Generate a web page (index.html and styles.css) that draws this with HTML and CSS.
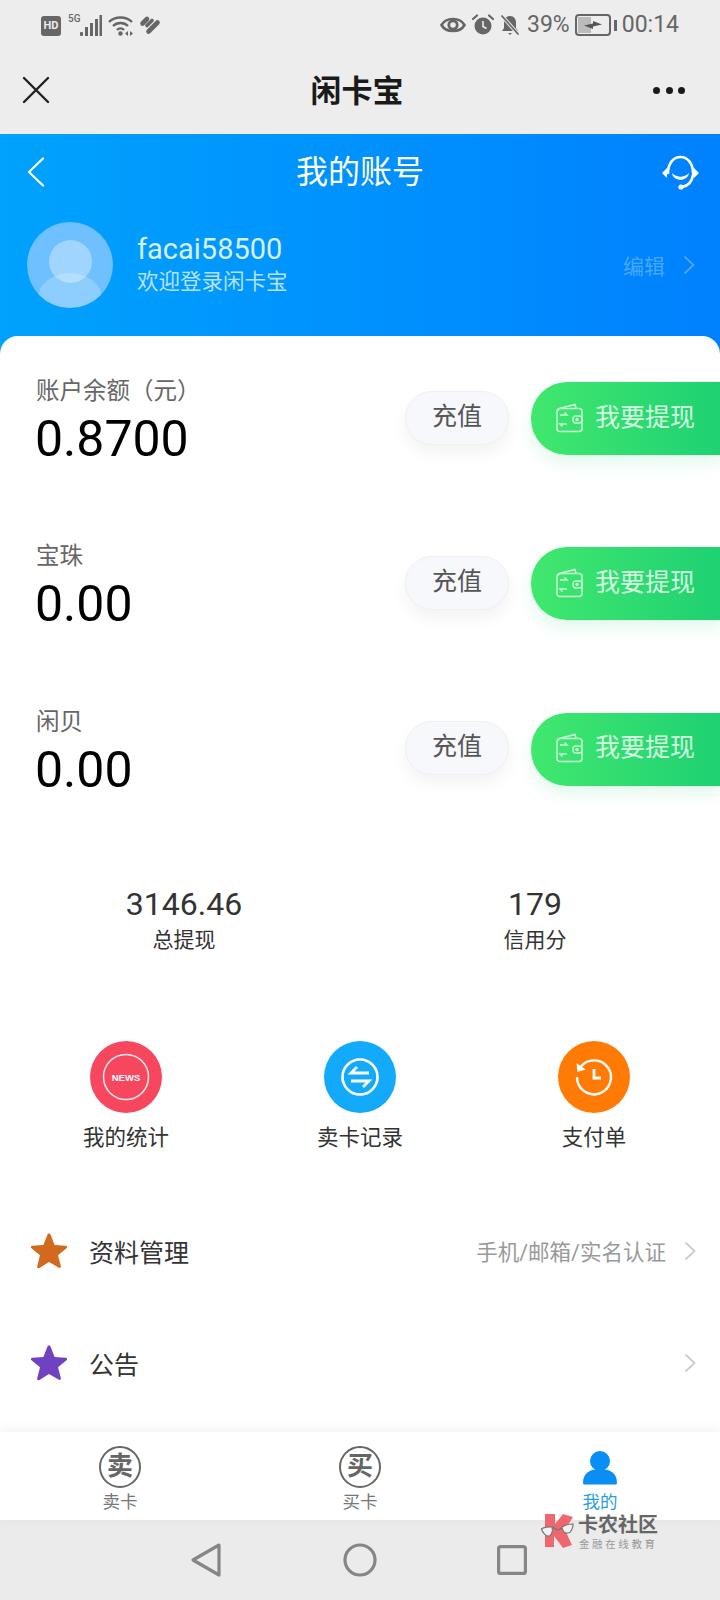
FILE: index.html
```html
<!DOCTYPE html>
<html lang="zh">
<head>
<meta charset="utf-8">
<title>闲卡宝</title>
<link rel="stylesheet" href="styles.css">
</head>
<body>
<div class="app">
  <div class="status">
    <div class="status-left">
      <span class="hd">HD</span>
      <span class="fiveg">5G</span>
      <svg class="sig" width="22" height="22" viewBox="0 0 22 22"><g fill="#666"><rect x="0" y="17" width="3" height="4" rx="1"/><rect x="5" y="12" width="3" height="9"/><rect x="10" y="8" width="3" height="13"/><rect x="15" y="4" width="3" height="17"/><rect x="19.500" y="0" width="2.500" height="21"/></g></svg>
      <svg class="wifi" width="26" height="22" viewBox="0 0 26 22"><g fill="none" stroke="#666" stroke-width="2.400"><path d="M1 7C7 1 18 1 24 7"/><path d="M5 11C9 7 16 7 20 11"/><path d="M9 15C11 13 14 13 16 15"/></g><circle cx="12.500" cy="18.500" r="2.200" fill="#666"/><path d="M17 18.500l3-2.500v5zM22 16l3 2.500-3 2.500z" fill="#666"/></svg>
      <svg class="hw" width="22" height="20" viewBox="0 0 22 20"><g fill="none" stroke="#666" stroke-width="4.600" stroke-linecap="round"><path d="M3.500 8.500L8 4"/><path d="M9.500 16.500L18.500 7.500"/><path d="M8 10.500L13 5.500" stroke-width="3.600"/></g></svg>
    </div>
    <div class="status-right">
      <svg width="26" height="20" viewBox="0 0 26 20"><path d="M1.500 10C6 2 20 2 24.500 10 20 18 6 18 1.500 10z" fill="none" stroke="#666" stroke-width="2.600"/><circle cx="13" cy="10" r="4.200" fill="none" stroke="#666" stroke-width="2.800"/></svg>
      <svg width="22" height="22" viewBox="0 0 22 22"><circle cx="11" cy="12" r="8.500" fill="#666"/><path d="M11 7v5.500l3.500 2" fill="none" stroke="#ededed" stroke-width="1.600"/><path d="M1 5L5 1.500M21 5L17 1.500" stroke="#666" stroke-width="2.200" stroke-linecap="round"/></svg>
      <svg class="bell" width="20" height="22" viewBox="0 0 20 22"><path d="M10 2c4 0 6 3 6 7v5l2 3H2l2-3V9c0-4 2-7 6-7z" fill="#666"/><path d="M8 19h4l-2 2z" fill="#666"/><path d="M2 2l16 18" stroke="#ededed" stroke-width="3.500"/><path d="M1.500 1.500l17 19" stroke="#666" stroke-width="1.800"/></svg>
      <span class="st-text">39%</span>
      <span class="battery"><span class="batt-fill"></span><svg class="bolt" width="20" height="10" viewBox="0 0 20 10"><path d="M1 5.500L10 3.500 10 1 19 4.500 10 6.500 10 9z" fill="#555"/></svg></span>
      <span class="batt-cap"></span>
      <span class="st-text">00:14</span>
    </div>
  </div>

  <div class="nav">
    <svg width="28" height="28" viewBox="0 0 28 28"><path d="M2 2L26 26M26 2L2 26" stroke="#222" stroke-width="2.400" stroke-linecap="round"/></svg>
    <div class="nav-title">闲卡宝</div>
    <div class="dots"><i></i><i></i><i></i></div>
  </div>

  <div class="hero">
    <div class="hero-bar">
      <svg width="18" height="30" viewBox="0 0 18 30"><path d="M16 1.500L2 15 16 28.500" fill="none" stroke="#fff" stroke-width="2.200" stroke-linecap="round" stroke-linejoin="round"/></svg>
      <div class="hero-title">我的账号</div>
      <svg width="38" height="36" viewBox="0 0 38 36"><g fill="none" stroke="#fff" stroke-width="2.600" stroke-linecap="round"><path d="M7 19C7 10 12 3 19.500 3S32 10 32 19"/><path d="M32 21c-1 7-5 11-11 12"/></g><path d="M11 19c5 5 12 5 17 0-1 9-16 9-17 0z" fill="#fff"/><path d="M1 19l5-5v10zM38 19l-5-5v10z" fill="#fff"/><circle cx="20" cy="33" r="2.600" fill="#fff"/></svg>
    </div>
    <div class="profile">
      <div class="avatar"><span class="av-head"></span><span class="av-body"></span></div>
      <div class="profile-text">
        <div class="uname">facai58500</div>
        <div class="welcome">欢迎登录闲卡宝</div>
      </div>
      <div class="edit">
        <span>编辑</span>
        <svg class="chev" width="12" height="20" viewBox="0 0 12 20"><path d="M1.500 1.500L10.500 10 1.500 18.500" fill="none" stroke="currentColor" stroke-width="1.800"/></svg>
      </div>
    </div>
  </div>

  <div class="card">
    <div class="funds">
      <div class="fund">
        <div class="fund-info"><div class="fund-label">账户余额（元）</div><div class="fund-value">0.8700</div></div>
        <div class="btn-light">充值</div>
        <div class="btn-green"><svg width="28" height="30" viewBox="0 0 28 30"><use href="#wallet"/></svg><span>我要提现</span></div>
      </div>
      <div class="fund">
        <div class="fund-info"><div class="fund-label">宝珠</div><div class="fund-value">0.00</div></div>
        <div class="btn-light">充值</div>
        <div class="btn-green"><svg width="28" height="30" viewBox="0 0 28 30"><use href="#wallet"/></svg><span>我要提现</span></div>
      </div>
      <div class="fund">
        <div class="fund-info"><div class="fund-label">闲贝</div><div class="fund-value">0.00</div></div>
        <div class="btn-light">充值</div>
        <div class="btn-green"><svg width="28" height="30" viewBox="0 0 28 30"><use href="#wallet"/></svg><span>我要提现</span></div>
      </div>
    </div>

    <div class="stats">
      <div class="stat"><div class="stat-value">3146.46</div><div class="stat-label">总提现</div></div>
      <div class="stat stat-b"><div class="stat-value">179</div><div class="stat-label">信用分</div></div>
    </div>

    <div class="shortcuts">
      <div class="shortcut">
        <svg width="72" height="72" viewBox="0 0 72 72"><circle cx="36" cy="36" r="36" fill="#f7475f"/><circle cx="36" cy="36" r="22.500" fill="none" stroke="#fff" stroke-width="1.500" opacity=".9"/><text x="36" y="39.500" text-anchor="middle" class="news">NEWS</text></svg>
        <div class="shortcut-label">我的统计</div>
      </div>
      <div class="shortcut">
        <svg width="72" height="72" viewBox="0 0 72 72"><circle cx="36" cy="36" r="36" fill="#14aafc"/><circle cx="36" cy="36" r="17.500" fill="none" stroke="#fff" stroke-width="2.600"/><path d="M45 32H27l6-6M27 40h18l-6 6" fill="none" stroke="#fff" stroke-width="2.800"/></svg>
        <div class="shortcut-label">卖卡记录</div>
      </div>
      <div class="shortcut">
        <svg width="72" height="72" viewBox="0 0 72 72"><circle cx="36" cy="36" r="36" fill="#ff7b05"/><path d="M22.500 26A17 17 0 1 1 19 36" fill="none" stroke="#fff" stroke-width="2.400"/><path d="M18.500 22l1 9 8-2.500z" fill="#fff"/><path d="M36 28v9h7" fill="none" stroke="#fff" stroke-width="2.800"/></svg>
        <div class="shortcut-label">支付单</div>
      </div>
    </div>

    <div class="rows">
      <div class="row">
        <svg width="38" height="38" viewBox="0 0 38 38"><use href="#star" fill="#d2691e"/></svg>
        <span class="row-title">资料管理</span>
        <span class="row-note">手机/邮箱/实名认证</span>
        <svg class="chev-gray" width="12" height="20" viewBox="0 0 12 20"><path d="M1.500 1.500L10.500 10 1.500 18.500" fill="none" stroke="currentColor" stroke-width="1.800"/></svg>
      </div>
      <div class="row">
        <svg width="38" height="38" viewBox="0 0 38 38"><use href="#star" fill="#6f42c1"/></svg>
        <span class="row-title">公告</span>
        <span class="row-note"></span>
        <svg class="chev-gray" width="12" height="20" viewBox="0 0 12 20"><path d="M1.500 1.500L10.500 10 1.500 18.500" fill="none" stroke="currentColor" stroke-width="1.800"/></svg>
      </div>
    </div>
  </div>

  <div class="tabbar">
    <div class="tab">
      <span class="seal">卖</span>
      <span class="tab-label">卖卡</span>
    </div>
    <div class="tab">
      <span class="seal">买</span>
      <span class="tab-label">买卡</span>
    </div>
    <div class="tab tab-on">
      <svg width="36" height="36" viewBox="0 0 36 36"><circle cx="18" cy="11" r="10" fill="#0a8ef5"/><path d="M1 33c0-10 7-14 17-14s17 4 17 14c0 1-1 1.500-2 1.500H3c-1 0-2-.5-2-1.500z" fill="#0a8ef5"/></svg>
      <span class="tab-label">我的</span>
    </div>
  </div>

  <div class="sysnav">
    <svg width="32" height="36" viewBox="0 0 32 36"><path d="M29 3L3 18 29 33z" fill="none" stroke="#868686" stroke-width="3.200" stroke-linejoin="round"/></svg>
    <svg width="34" height="34" viewBox="0 0 34 34"><circle cx="17" cy="17" r="15" fill="none" stroke="#868686" stroke-width="3.200"/></svg>
    <svg width="30" height="30" viewBox="0 0 30 30"><rect x="1.600" y="1.600" width="26.800" height="26.800" rx="2" fill="none" stroke="#868686" stroke-width="3.200"/></svg>
  </div>

  <div class="watermark">
    <svg class="wm-logo" width="34" height="35" viewBox="0 0 34 35"><path d="M5 1H15V11L23 1l10 3-8 13 7 15-9 3-9-12v11H5z" fill="#ef5f68" opacity=".95"/><path d="M1 16l11-2 6 3 6-3 9-3" fill="none" stroke="#777" stroke-width="1.200"/><path d="M1.500 16c2-2 8-2.500 10.500-2 1 3 0 8-2.500 9-3 1-7-3-8-7z" fill="#f1f1f1" stroke="#777" stroke-width="1.200"/><path d="M22 14c3-2 8-3 11-3 0 4-2 9-5 9-3 1-6-2-6-6z" fill="#f1f1f1" stroke="#777" stroke-width="1.200"/></svg>
    <div class="wm-text"><div class="wm-name">卡农社区</div><div class="wm-sub">金融在线教育</div></div>
  </div>

  <svg class="defs" width="0" height="0">
    <defs>
      <g id="wallet" fill="none" stroke="#c9f7d4" stroke-width="1.500"><path d="M2 8C2 6 3 5.500 5 5L19 1.500 20 5"/><rect x="1" y="5.500" width="25" height="23" rx="3"/><rect x="17" y="13" width="9" height="7" rx="3"/><circle cx="21" cy="16.500" r="1"/><path d="M4 12h7l-2.500-2.500M11 21H4l2.500 2.500"/></g>
      <path id="star" d="M19 1.500c.8 0 1.300.5 1.600 1.300l4 10.200 11 .7c1.600.1 2 1.700.9 2.600l-8.500 7 2.800 10.600c.4 1.500-1 2.500-2.300 1.700L19 30l-9.500 5.900c-1.300.8-2.700-.2-2.300-1.700L10 23.300l-8.500-7c-1.100-.9-.7-2.500.9-2.600l11-.7 4-10.200c.3-.8.8-1.300 1.600-1.300z"/>
    </defs>
  </svg>
</div>
</body>
</html>
```

FILE: styles.css
```css
* { box-sizing: border-box; }
html, body { margin: 0; padding: 0; }
body { font-family: Roboto, "Noto Sans CJK SC", sans-serif; background: #fff; }
.app { position: relative; width: 720px; height: 1600px; overflow: hidden; display: flex; flex-direction: column; }
.defs { position: absolute; }

.status { height: 50px; flex: none; background: #ededed; display: flex; justify-content: space-between; align-items: center; padding: 0 41px; color: #666; }
.status-left, .status-right { display: flex; align-items: center; }
.hd { width: 20px; height: 20px; border-radius: 3px; background: #666; color: #ededed; font-size: 11px; font-weight: 700; line-height: 20px; text-align: center; margin-top: 2px; }
.fiveg { font-size: 10px; font-weight: 500; margin: -14px 0 0 7px; width: 11px; }
.sig { margin: 2px 0 0 1px; }
.wifi { margin: 2px 0 0 6px; }
.hw { margin-left: 5px; }
.status-right { gap: 6px; }
.status-right svg { flex: none; }
.bell { margin-right: 1px; }
.st-text { font-size: 23px; line-height: 28px; }
.battery { position: relative; width: 36px; height: 22px; border: 2px solid #666; border-radius: 4px; margin-left: -1px; display: block; }
.batt-fill { position: absolute; left: 1px; top: 1px; bottom: 1px; width: 13px; background: #bbb; }
.bolt { position: absolute; left: 6px; top: 4px; }
.batt-cap { width: 3px; height: 11px; background: #666; margin-left: -3px; margin-right: -1px; }

.nav { height: 84px; flex: none; background: #ededed; display: flex; align-items: center; justify-content: space-between; padding: 0 35px 4px 22px; position: relative; }
.nav-title { position: absolute; left: 0; right: 6px; top: 21px; text-align: center; font-size: 31px; line-height: 42px; font-weight: 700; color: #1a1a1a; }
.dots { display: flex; gap: 5.500px; }
.dots i { width: 7px; height: 7px; border-radius: 50%; background: #1a1a1a; display: block; }

.hero { height: 220px; flex: none; background: linear-gradient(90deg, #00a2fd 0%, #0081fe 100%); color: #fff; }
.hero-bar { height: 76px; display: flex; align-items: center; justify-content: space-between; padding: 0 21px 0 27px; position: relative; }
.hero-title { position: absolute; left: 0; right: 0; text-align: center; font-size: 32px; line-height: 44px; }
.profile { display: flex; align-items: center; padding: 12px 27px 0 27px; }
.avatar { position: relative; width: 86px; height: 86px; border-radius: 50%; background: #6ec0ff; overflow: hidden; flex: none; }
.av-head { position: absolute; left: 22px; top: 18px; width: 43px; height: 43px; border-radius: 50%; background: rgba(255,255,255,.34); }
.av-body { position: absolute; left: 11px; top: 51px; width: 64px; height: 50px; border-radius: 50%; background: rgba(255,255,255,.22); }
.profile-text { margin-left: 24px; flex: 1; }
.uname { font-size: 29px; line-height: 34px; color: #d6f0ff; margin-top: -1px; }
.welcome { font-size: 21.500px; line-height: 30px; color: #b5e2ff; margin-top: 1px; }
.edit { display: flex; align-items: center; color: rgba(255,255,255,.3); font-size: 21px; gap: 18px; margin-right: -2px; }

.card { flex: 1; min-height: 0; background: #fff; border-radius: 18px 18px 0 0; margin-top: -18px; padding-top: 46px; overflow: hidden; }
.funds { display: flex; flex-direction: column; gap: 92.400px; }
.fund { height: 73px; display: flex; align-items: center; padding-left: 35px; }
.fund-info { flex: 1; align-self: flex-start; margin-top: -6px; }
.fund-label { font-size: 23.500px; line-height: 30px; color: #666; padding-left: 1px; }
.fund-value { font-size: 50px; line-height: 58px; color: #000; margin-top: 4px; }
.btn-light { width: 104px; height: 54px; border-radius: 27px; background: #f7f8fb; border: 1px solid #f0f0f3; color: #555; font-size: 25px; line-height: 50px; text-align: center; box-shadow: 0 8px 16px rgba(0,0,0,.05); margin-top: -2px; }
.btn-green { width: 189px; height: 73px; margin-left: 22px; border-radius: 36px 0 0 36px; background: linear-gradient(90deg, #41e86e 0%, #1fd173 100%); color: #d5fbe0; font-size: 25px; display: flex; align-items: center; padding-left: 25px; gap: 11px; box-shadow: 0 8px 16px rgba(40,210,110,.14); }
.btn-green svg { flex: none; margin-bottom: 2px; }
.btn-green span { line-height: 30px; margin-bottom: 2px; }

.stats { display: flex; margin-top: 99px; height: 70px; padding-left: 104px; color: #333; }
.stat { text-align: center; width: 160px; }
.stat-b { margin-left: 191px; }
.stat-value { font-size: 32px; line-height: 38px; }
.stat-label { font-size: 21px; line-height: 30px; margin-top: 2px; }

.shortcuts { display: flex; padding-left: 9px; margin-top: 86.500px; }
.shortcut { width: 234px; display: flex; flex-direction: column; align-items: center; }
.shortcut svg { display: block; }
.news { font-family: "Liberation Sans", Arial, sans-serif; font-size: 9.500px; font-weight: 700; fill: #fff; }
.shortcut-label { font-size: 21.500px; line-height: 30px; color: #333; margin-top: 10px; }

.rows { margin-top: 41.700px; }
.row { height: 112px; display: flex; align-items: center; padding: 0 24px 0 30px; color: #333; }
.row svg { flex: none; }
.row-title { font-size: 25px; margin-left: 21px; }
.row-note { flex: 1; text-align: right; font-size: 21.500px; color: #999; margin-right: 18px; }
.chev-gray { color: #ccc; }

.tabbar { height: 88px; flex: none; background: #fff; display: flex; box-shadow: 0 -2px 12px rgba(0,0,0,.06); position: relative; padding: 14px 0 0 0; }
.tab { width: 240px; display: flex; flex-direction: column; align-items: center; color: #777; }
.seal { width: 42px; height: 42px; border: 2px solid #666; border-radius: 50%; font-size: 26px; line-height: 36px; text-align: center; font-weight: 700; color: #666; display: block; }
.tab-label { font-size: 17.500px; line-height: 24px; margin-top: 2px; }
.tab-on { color: #2c9fd8; }
.tab-on svg { display: block; margin-top: 4px; margin-bottom: 2px; }

.sysnav { height: 80px; flex: none; background: #ebebeb; display: flex; align-items: center; padding-left: 190px; }
.sysnav svg:nth-child(2) { margin-left: 121px; }
.sysnav svg:nth-child(3) { margin-left: 120px; }

.watermark { position: absolute; left: 540px; top: 1513px; display: flex; gap: 4px; align-items: flex-start; }
.wm-logo { flex: none; }
.wm-text { padding-top: 1px; }
.wm-name { font-size: 20px; line-height: 23px; font-weight: 700; color: #666; }
.wm-sub { font-size: 10.500px; line-height: 14px; color: #999; letter-spacing: 2.600px; margin-top: 1px; padding-left: 1px; }
```
